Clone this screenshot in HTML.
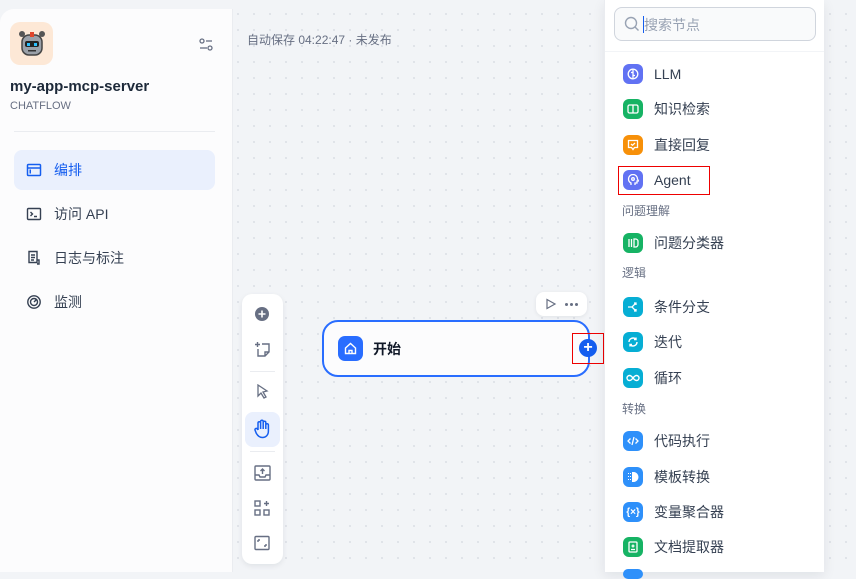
<!DOCTYPE html>
<html><head><meta charset="utf-8"><style>
*{box-sizing:border-box;margin:0;padding:0}
body{width:856px;height:572px;overflow:hidden;background:#f2f4f7;font-family:"Liberation Sans","Noto Sans CJK SC",sans-serif;position:relative}
.canvas{position:absolute;left:0;top:0;width:856px;height:572px;background-color:#f2f4f7;background-image:radial-gradient(#dfe2e8 1px,transparent 1.2px);background-size:16px 16px;background-position:6px 6px}
.side{position:absolute;left:0;top:9px;width:233px;height:563px;background:#fcfcfd;border-top-left-radius:14px;border-right:1px solid #eaecf0}
.abs{position:absolute}
.nav{position:absolute;left:14px;width:201px;height:40px;border-radius:8px;display:flex;align-items:center;padding-left:12px;font-size:14px;color:#354052}
.nav svg{margin-right:12px}
.panel{position:absolute;left:604px;top:0;width:220px;height:572px;background:#fff;box-shadow:0 4px 12px rgba(16,24,40,.08);border-left:1px solid #eaecf0}
.it{position:absolute;left:18px;display:flex;align-items:center;font-size:14px;color:#354052}
.ic{width:20px;height:20px;border-radius:6px;margin-right:11px;display:flex;align-items:center;justify-content:center}
.cat{position:absolute;left:17px;font-size:12px;color:#676f83}
.tb{position:absolute;left:242px;top:294px;width:41px;height:270px;background:#fff;border-radius:10px;box-shadow:0 2px 6px rgba(16,24,40,.08)}
</style></head><body>
<div class="canvas"></div>
<div class="side">
 <div class="abs" style="left:10px;top:13px;width:43px;height:43px;border-radius:10px;background:#fde8d6;display:flex;align-items:center;justify-content:center">
  <svg width="30" height="30" viewBox="0 0 30 30"><circle cx="5" cy="5" r="3" fill="#555"/><circle cx="25" cy="5" r="3" fill="#555"/><rect x="5" y="6" width="20" height="20" rx="7" fill="#9aa0a8" stroke="#444" stroke-width="1.5"/><rect x="13" y="3" width="4" height="5" fill="#e0452b"/><rect x="8" y="12" width="14" height="6" rx="2" fill="#222"/><rect x="10" y="14" width="3" height="3" fill="#2ac0ff"/><rect x="17" y="14" width="3" height="3" fill="#2ac0ff"/><rect x="11" y="21" width="8" height="1.5" fill="#333"/></svg>
 </div>
 <svg class="abs" style="left:198px;top:28px" width="16" height="16" viewBox="0 0 16 16" fill="none" stroke="#676f83" stroke-width="1.3"><circle cx="4" cy="4" r="2"/><line x1="8" y1="4" x2="14" y2="4"/><circle cx="12" cy="11" r="2"/><line x1="2" y1="11" x2="9" y2="11"/></svg>
 <div class="abs" style="left:10px;top:69px;font-size:15px;font-weight:bold;color:#1d2939">my-app-mcp-server</div>
 <div class="abs" style="left:10px;top:91px;font-size:11px;color:#676f83">CHATFLOW</div>
 <div class="abs" style="left:14px;top:122px;width:201px;height:1px;background:#eaecf0"></div>
 <div class="nav" style="top:141px;background:#eaf0fd;color:#155eef"><svg width="16" height="16" viewBox="0 0 16 16" fill="none" stroke="#155eef" stroke-width="1.5"><rect x="1.5" y="2.5" width="13" height="11" rx="1"/><line x1="1.5" y1="6" x2="14.5" y2="6"/><rect x="3.5" y="7.5" width="1.5" height="4" fill="#155eef" stroke="none"/></svg>编排</div>
 <div class="nav" style="top:185px"><svg width="16" height="16" viewBox="0 0 16 16" fill="none" stroke="#354052" stroke-width="1.4"><rect x="1.5" y="2.5" width="13" height="11" rx="1"/><path d="M4.5 6l2 2-2 2M8 10.5h3"/></svg>访问 API</div>
 <div class="nav" style="top:229px"><svg width="16" height="16" viewBox="0 0 16 16" fill="none" stroke="#354052" stroke-width="1.4"><path d="M3 1.5h8v11H3zM5 5h4M5 7.5h4M5 10h3M11 10h2v4h-2"/></svg>日志与标注</div>
 <div class="nav" style="top:273px"><svg width="16" height="16" viewBox="0 0 16 16" fill="none" stroke="#354052" stroke-width="1.4"><circle cx="8" cy="8" r="6.2"/><circle cx="8" cy="8" r="3.5"/><path d="M8 8l3-3"/></svg>监测</div>
</div>
<div class="abs" style="left:247px;top:31px;font-size:12px;color:#676f83">自动保存 04:22:47 · 未发布</div>
<div class="tb">
 <svg class="abs" style="left:12px;top:12px" width="16" height="16" viewBox="0 0 16 16"><circle cx="8" cy="8" r="7" fill="#676f83"/><path d="M8 4.5v7M4.5 8h7" stroke="#fff" stroke-width="1.6"/></svg>
 <svg class="abs" style="left:12px;top:47px" width="17" height="17" viewBox="0 0 17 17" fill="none" stroke="#676f83" stroke-width="1.4"><path d="M1 3.5h5M3.5 1v5M8 3h7v8l-4 4H4V8M15 11h-4v4"/></svg>
 <div class="abs" style="left:8px;top:77px;width:25px;height:1px;background:#eaecf0"></div>
 <svg class="abs" style="left:14px;top:90px" width="14" height="16" viewBox="0 0 14 16" fill="none" stroke="#676f83" stroke-width="1.3"><path d="M2 1l9 6-4 1 3 5-2 1-3-5-3 3z"/></svg>
 <div class="abs" style="left:3px;top:118px;width:35px;height:35px;border-radius:8px;background:#eaf0fd"></div>
 <svg class="abs" style="left:11px;top:125px" width="18" height="20" viewBox="0 0 18 20" fill="none" stroke="#155eef" stroke-width="1.5"><path d="M5 11V4a1.3 1.3 0 012.6 0v6V2.5a1.3 1.3 0 012.6 0V10V3.5a1.3 1.3 0 012.6 0V10V6a1.3 1.3 0 012.6 0v6c0 4-2.5 6.5-6 6.5-3 0-4.5-1.5-6-4L2 11a1.3 1.3 0 012.2-1.2L5 11"/></svg>
 <div class="abs" style="left:8px;top:157px;width:25px;height:1px;background:#eaecf0"></div>
 <svg class="abs" style="left:12px;top:171px" width="17" height="16" viewBox="0 0 17 16" fill="none" stroke="#676f83" stroke-width="1.4"><rect x="1" y="1" width="15" height="14" rx="1"/><path d="M1 10h4l1 2h5l1-2h4M8.5 4v5M6.5 6l2-2 2 2"/></svg>
 <svg class="abs" style="left:12px;top:206px" width="16" height="16" viewBox="0 0 16 16" fill="none" stroke="#676f83" stroke-width="1.4"><rect x="1" y="1" width="5" height="5"/><rect x="1" y="10" width="5" height="5"/><rect x="10" y="10" width="5" height="5"/><path d="M12.5 1v5M10 3.5h5"/></svg>
 <svg class="abs" style="left:12px;top:241px" width="16" height="16" viewBox="0 0 16 16" fill="none" stroke="#676f83" stroke-width="1.4"><rect x="1" y="1.5" width="14" height="13" rx="1"/><path d="M4 5v2M4 5h2M12 11v-2M12 11h-2"/></svg>
</div>
<div class="abs" style="left:536px;top:292px;width:51px;height:24px;background:#fff;border-radius:8px;box-shadow:0 1px 4px rgba(16,24,40,.08)">
 <svg class="abs" style="left:9px;top:6px" width="12" height="12" viewBox="0 0 12 12" fill="none" stroke="#676f83" stroke-width="1.2"><path d="M2 1.5l8 4.5-8 4.5z"/></svg>
 <div class="abs" style="left:29px;top:11px;width:3px;height:3px;border-radius:50%;background:#676f83;box-shadow:5px 0 #676f83,10px 0 #676f83"></div>
</div>
<div class="abs" style="left:322px;top:320px;width:268px;height:57px;border:2px solid #296dff;border-radius:16px;background:#fcfcfd">
 <div class="abs" style="left:14px;top:14px;width:25px;height:25px;border-radius:7px;background:#296dff;display:flex;align-items:center;justify-content:center"><svg width="13" height="13" viewBox="0 0 13 13" fill="none" stroke="#fff" stroke-width="1.4"><path d="M1.5 6L6.5 1.5 11.5 6V11.5H1.5z"/><path d="M5 11.5V8.5h3v3"/></svg></div>
 <div class="abs" style="left:49px;top:17px;font-size:14px;font-weight:bold;color:#101828">开始</div>
</div>
<div class="abs" style="left:579px;top:339px;width:18px;height:18px;border-radius:50%;background:#155eef;color:#fff;font-size:16px;line-height:18px;text-align:center;font-weight:bold">+</div>
<div class="abs" style="left:572px;top:333px;width:32px;height:31px;border:1px solid #e00"></div>
<div class="panel">
 <div class="abs" style="left:9px;top:7px;width:202px;height:34px;border:1px solid #d0d5dd;border-radius:8px;background:#f9fafb">
  <svg class="abs" style="left:9px;top:8px" width="16" height="16" viewBox="0 0 16 16" fill="none" stroke="#98a2b3" stroke-width="1.4"><circle cx="7" cy="7" r="5.5"/><path d="M11 11l3.5 3.5"/></svg>
  <div class="abs" style="left:28px;top:8px;width:1px;height:17px;background:#155eef"></div>
  <div class="abs" style="left:29px;top:7px;font-size:14px;color:#98a2b3">搜索节点</div>
 </div>
 <div class="abs" style="left:0;top:51px;width:219px;height:1px;background:#f2f4f7"></div>
 <div class="it" style="top:64px"><div class="ic" style="background:#6172f3"><svg width="12" height="12" viewBox="0 0 12 12" fill="none" stroke="#fff" stroke-width="1.3"><circle cx="6" cy="6" r="4.8"/><path d="M6 2v8M4 4.5h2M6 7.5h2"/></svg></div>LLM</div>
 <div class="it" style="top:99px"><div class="ic" style="background:#16b364"><svg width="12" height="12" viewBox="0 0 12 12" fill="none" stroke="#fff" stroke-width="1.3"><rect x="1" y="2" width="10" height="8" rx="1.5"/><path d="M6 2v8"/></svg></div>知识检索</div>
 <div class="it" style="top:135px"><div class="ic" style="background:#f79009"><svg width="12" height="12" viewBox="0 0 12 12" fill="none" stroke="#fff" stroke-width="1.3"><path d="M1.5 1.5h9v7h-3L6 10.5 4.5 8.5h-3z"/><path d="M4 5l1.5 1.3L8 4"/></svg></div>直接回复</div>
 <div class="it" style="top:170px"><div class="ic" style="background:#6172f3"><svg width="12" height="12" viewBox="0 0 12 12" fill="none" stroke="#fff" stroke-width="1.3"><path d="M4 11V9C2 8 1.5 6.5 1.5 5a4.5 4.5 0 019 0l1 2h-1.5v2H8v2"/><circle cx="6" cy="5" r="1.3"/></svg></div>Agent</div>
 <div class="abs" style="left:13px;top:166px;width:92px;height:29px;border:1px solid #e00"></div>
 <div class="cat" style="top:202px">问题理解</div>
 <div class="it" style="top:233px"><div class="ic" style="background:#16b364"><svg width="12" height="12" viewBox="0 0 12 12" fill="none" stroke="#fff" stroke-width="1.3"><path d="M2 2v8M4.5 2v8M7 2h1.5a2.5 2.5 0 012.5 2.5v3A2.5 2.5 0 018.5 10H7z"/></svg></div>问题分类器</div>
 <div class="cat" style="top:264px">逻辑</div>
 <div class="it" style="top:297px"><div class="ic" style="background:#06aed4"><svg width="12" height="12" viewBox="0 0 12 12" fill="none" stroke="#fff" stroke-width="1.3"><path d="M1 6h4l4-4M5 6l4 4M7 2h2v2M9 8v2H7"/></svg></div>条件分支</div>
 <div class="it" style="top:332px"><div class="ic" style="background:#06aed4"><svg width="12" height="12" viewBox="0 0 12 12" fill="none" stroke="#fff" stroke-width="1.4"><path d="M2 6a4 4 0 017-2.6M10 6a4 4 0 01-7 2.6M9 1.5v2H7M3 10.5v-2h2"/></svg></div>迭代</div>
 <div class="it" style="top:368px"><div class="ic" style="background:#06aed4"><svg width="14" height="12" viewBox="0 0 14 12" fill="none" stroke="#fff" stroke-width="1.4"><path d="M7 6C5.5 4 4.5 3.5 3.5 3.5a2.5 2.5 0 000 5C4.5 8.5 5.5 8 7 6s2.5-2.5 3.5-2.5a2.5 2.5 0 010 5C9.5 8.5 8.5 8 7 6z"/></svg></div>循环</div>
 <div class="cat" style="top:400px">转换</div>
 <div class="it" style="top:431px"><div class="ic" style="background:#2e90fa"><svg width="12" height="12" viewBox="0 0 12 12" fill="none" stroke="#fff" stroke-width="1.3"><path d="M3.5 3.5L1 6l2.5 2.5M8.5 3.5L11 6 8.5 8.5M7 2L5 10"/></svg></div>代码执行</div>
 <div class="it" style="top:467px"><div class="ic" style="background:#2e90fa"><svg width="12" height="12" viewBox="0 0 12 12"><path d="M5 1h1.5a5 5 0 010 10H5z" fill="#fff"/><g fill="#fff"><rect x="1" y="2" width="1" height="1"/><rect x="3" y="2" width="1" height="1"/><rect x="1" y="5" width="1" height="1"/><rect x="3" y="5" width="1" height="1"/><rect x="1" y="8" width="1" height="1"/><rect x="3" y="8" width="1" height="1"/></g></svg></div>模板转换</div>
 <div class="it" style="top:502px"><div class="ic" style="background:#2e90fa;color:#fff;font-size:10px;font-weight:bold">{×}</div>变量聚合器</div>
 <div class="it" style="top:537px"><div class="ic" style="background:#16b364"><svg width="12" height="12" viewBox="0 0 12 12" fill="none" stroke="#fff" stroke-width="1.3"><rect x="2" y="1" width="8" height="10" rx="1"/><path d="M6 3.5v3M4.5 5h3M4 8.5h4"/></svg></div>文档提取器</div>
 <div class="abs" style="left:18px;top:569px;width:20px;height:10px;border-radius:6px;background:#2e90fa"></div>
</div>
</body></html>
